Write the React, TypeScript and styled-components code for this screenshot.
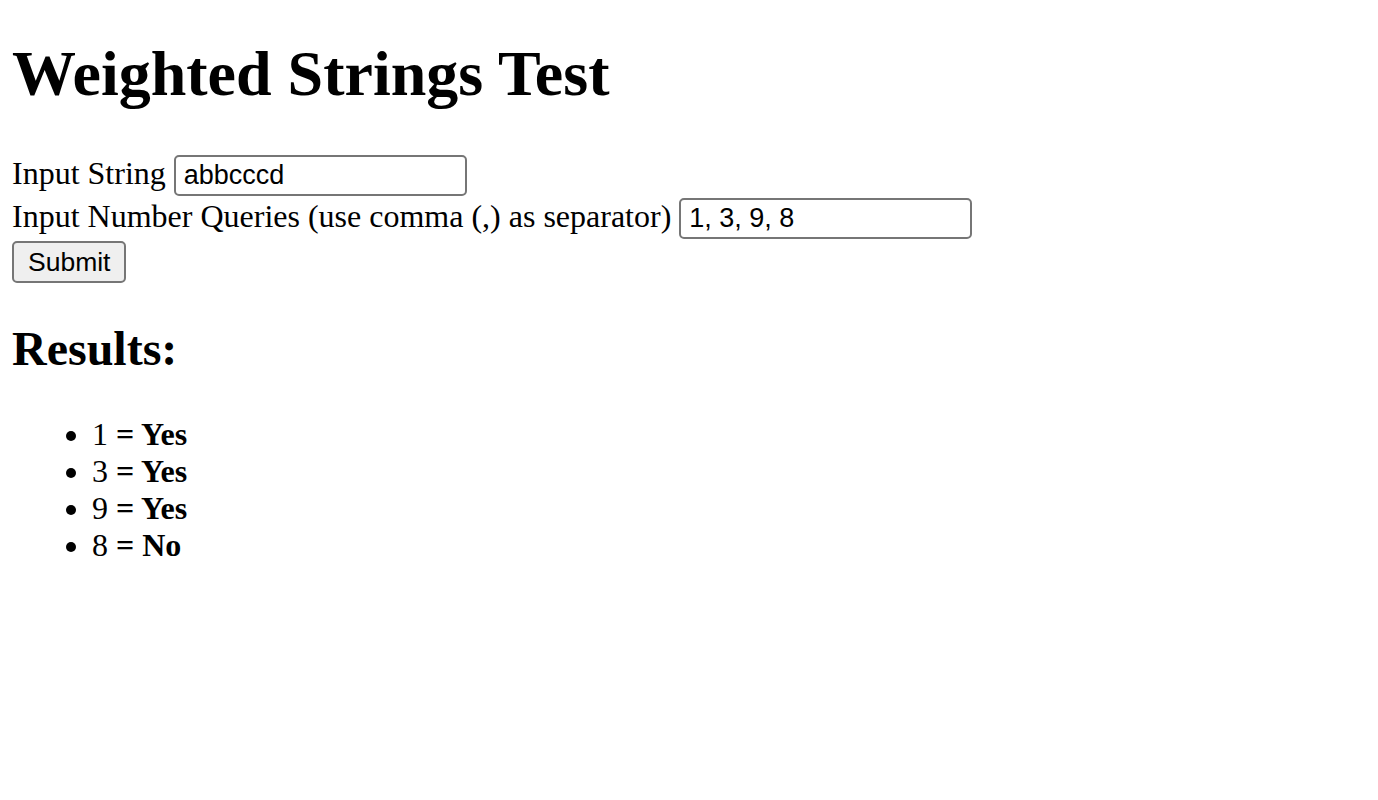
import * as React from 'react';
import styled, { createGlobalStyle } from 'styled-components';

const GlobalStyle = createGlobalStyle`
  body {
    margin: 12px;
    font-family: "Liberation Serif", "Times New Roman", serif;
    font-size: 32px;
    color: #000;
    background: #fff;
  }
`;

const Title = styled.h1`
  font-size: 64px;
  line-height: 73px;
  font-weight: 700;
  margin: 25px 0 45px;
`;

const Form = styled.form`
  display: flex;
  flex-direction: column;
  align-items: flex-start;
  gap: 2px;
`;

const Row = styled.div`
  display: flex;
  align-items: baseline;
  gap: 8px;
`;

const Label = styled.label`
  white-space: nowrap;
`;

const TextInput = styled.input`
  box-sizing: border-box;
  width: 293px;
  height: 41px;
  padding: 0 8px;
  border: 2px solid #767676;
  border-radius: 5px;
  font-family: "Liberation Sans", Arial, sans-serif;
  font-size: 27px;
  color: #000;
  background: #fff;
  outline: none;
`;

const Button = styled.button`
  box-sizing: border-box;
  height: 42px;
  padding: 0 14px;
  border: 2px solid #767676;
  border-radius: 5px;
  background: #efefef;
  font-family: "Liberation Sans", Arial, sans-serif;
  font-size: 26.5px;
  color: #000;
  cursor: pointer;
`;

const Subtitle = styled.h2`
  font-size: 48px;
  line-height: 56px;
  font-weight: 700;
  margin: 38px 0 0;
`;

const Results = styled.ul`
  margin: 39px 0 0;
  padding-left: 80px;
  line-height: 37px;
`;

const weight = (s: string, q: number[]) => {
  // weights of every run of one repeated letter
  const set = new Set<number>();
  let i = 0;
  while (i < s.length) {
    let j = i;
    while (j < s.length && s[j] === s[i]) {
      j++;
      set.add((s.charCodeAt(i) - 96) * (j - i));
    }
    i = j;
  }
  return q.map(n => set.has(n));
};

export default function App() {
  const [text, setText] = React.useState('abbcccd');
  const [queries, setQueries] = React.useState('1, 3, 9, 8');
  const [results, setResults] = React.useState<{ n: number; ok: boolean }[]>(() => {
    const q = [1, 3, 9, 8];
    return weight('abbcccd', q).map((ok, i) => ({ n: q[i], ok }));
  });

  const handleSubmit = (e: React.FormEvent) => {
    e.preventDefault();
    const q = queries.split(',').map(v => parseInt(v, 10)).filter(v => !isNaN(v));
    setResults(weight(text, q).map((ok, i) => ({ n: q[i], ok })));
  };

  return (
    <>
      <GlobalStyle />
      <Title>Weighted Strings Test</Title>
      <Form onSubmit={ handleSubmit }>
        <Row>
          <Label>Input String</Label>
          <TextInput value={ text } onChange={ e => setText(e.target.value) } />
        </Row>
        <Row>
          <Label>Input Number Queries (use comma (,) as separator)</Label>
          <TextInput value={ queries } onChange={ e => setQueries(e.target.value) } />
        </Row>
        <Button type='submit'>Submit</Button>
      </Form>
      <Subtitle>Results:</Subtitle>
      <Results>
        { results.map((r, i) => (
          <li key={ i }>
            { r.n } <b>= { r.ok ? 'Yes' : 'No' }</b>
          </li>
        )) }
      </Results>
    </>
  );
}
